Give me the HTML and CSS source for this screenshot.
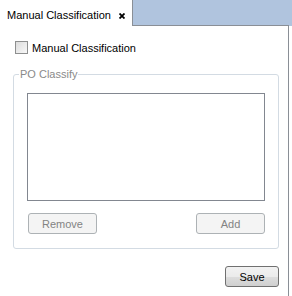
FILE: index.html
```html
<!DOCTYPE html>
<html>
<head>
<meta charset="utf-8">
<link rel="stylesheet" href="styles.css">
</head>
<body>
<div class="tabstrip">
  <div class="tab"><span class="tab-title">Manual Classification</span><svg class="tab-close" width="6" height="6" viewBox="0 0 6 6"><path d="M0.5 0.5L5.5 5.5M5.5 0.5L0.5 5.5" stroke="#000" stroke-width="1.8"/></svg></div>
  <div class="tab-fill"></div>
</div>
<div class="panel">
  <label class="check-row"><span class="checkbox"></span><span>Manual Classification</span></label>
  <fieldset class="group">
    <legend>PO Classify</legend>
    <div class="listbox"></div>
    <div class="btn-row">
      <button class="btn disabled">Remove</button>
      <button class="btn disabled">Add</button>
    </div>
  </fieldset>
  <div class="footer"><button class="btn save">Save</button></div>
</div>
</body>
</html>
```
FILE: styles.css
```css
html, body { margin: 0; padding: 0; background: #fff; }
body { width: 292px; height: 296px; overflow: hidden; font-family: "Liberation Sans", Arial, sans-serif; font-size: 11px; color: #000; }
.tabstrip { display: flex; height: 26px; background: #b0c4de; }
.tab { width: 133px; box-sizing: border-box; background: #fff; border-right: 1px solid #8a8f96; display: flex; align-items: center; padding-left: 7px; padding-top: 4px; }
.tab-title { font-size: 11px; }
.tab-close { margin-left: 8px; margin-top: 1px; }
.tab-fill { flex: 1; border-bottom: 1px solid #8a8f96; margin-right: 3px; }
.panel { width: 289px; height: 270px; box-sizing: border-box; border-right: 1px solid #8a8f96; }
.check-row { display: flex; align-items: center; padding: 15px 0 0 15px; height: 13px; }
.checkbox { width: 11px; height: 11px; border: 1px solid #8e8f8f; background: linear-gradient(135deg, #dcdcdc, #f8f8f8); margin-right: 4px; }
.group { margin: 14px 0 0 13px; width: 266px; height: 181px; box-sizing: border-box; border: 1px solid #d3dbe3; border-radius: 3px; padding: 0 0 0 13px; }
.group legend { color: #8a8a8a; padding: 0 1px; margin-left: -8px; font-size: 11px; }
.listbox { width: 238px; height: 108px; box-sizing: border-box; border: 1px solid #828790; margin-top: 13px; }
.btn-row { display: flex; justify-content: space-between; width: 237px; margin-top: 12px; margin-left: 1px; }
.btn { width: 69px; height: 21px; box-sizing: border-box; font-family: inherit; font-size: 11px; border-radius: 3px; padding: 0; }
.btn.disabled { background: #f4f4f4; border: 1px solid #adb2b5; color: #838383; }
.footer { display: flex; justify-content: flex-end; padding: 17px 9px 0 0; }
.btn.save { width: 54px; height: 21px; background: linear-gradient(#f2f2f2 0%, #ebebeb 50%, #dddddd 51%, #cfcfcf 100%); border: 1px solid #707070; color: #000; }
```
